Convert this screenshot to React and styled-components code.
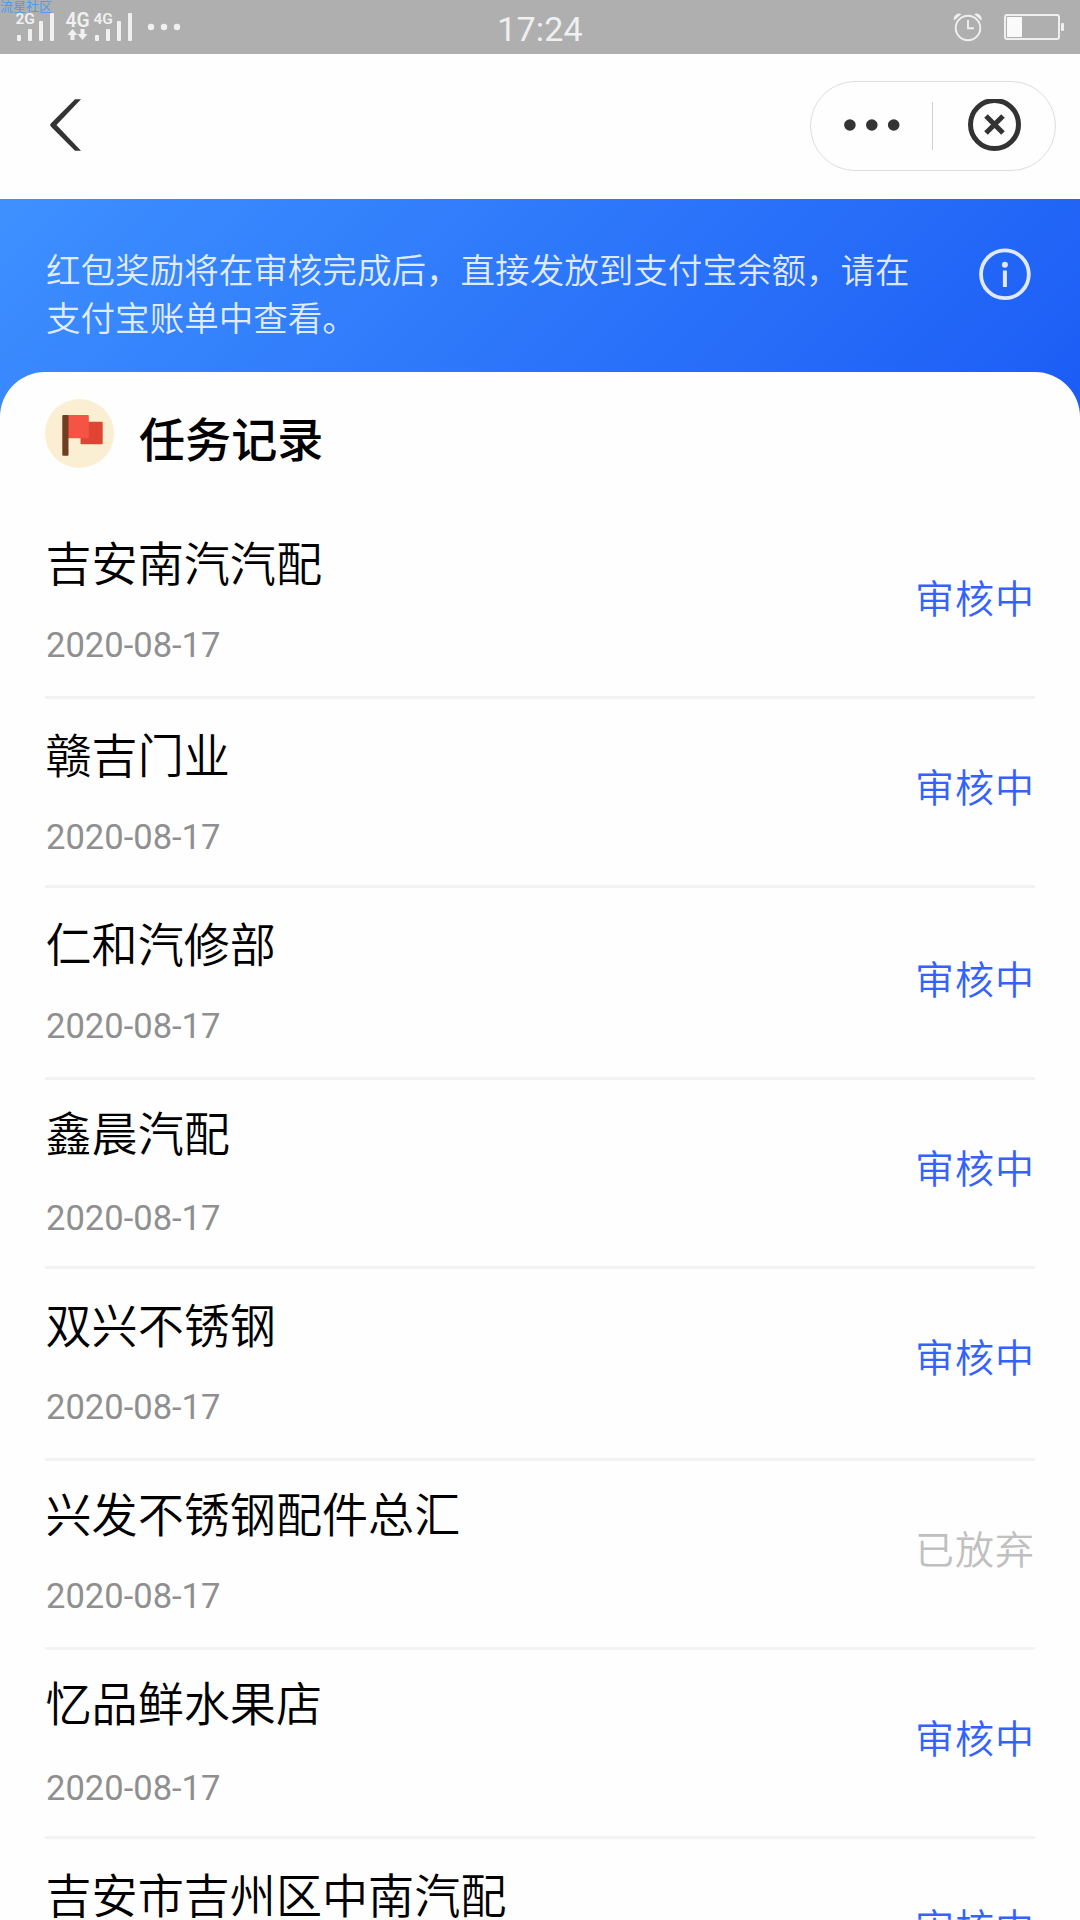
import React from "react";
import styled, { createGlobalStyle } from "styled-components";

const GlobalStyle = createGlobalStyle`
  * { box-sizing: border-box; }
  html, body { margin: 0; padding: 0; background: #fff; }
  body { overflow: hidden; font-family: Roboto, "Noto Sans CJK SC", sans-serif; }
`;

const Screen = styled.div`
  width: 1080px;
  height: 1920px;
  overflow: hidden;
  display: flex;
  flex-direction: column;
  background: #fefefe;
`;

const StatusBar = styled.header`
  position: relative;
  flex: none;
  height: 54px;
  display: grid;
  grid-template-columns: 1fr auto 1fr;
  align-items: start;
  background: #afafaf;
  color: #f0f0f0;
`;

const Watermark = styled.span`
  position: absolute;
  left: 0;
  top: -1px;
  font: 400 13px/14px "Noto Sans CJK SC", sans-serif;
  color: #4a9df0;
`;

const StatusLeft = styled.div`
  display: flex;
`;

const Clock = styled.time`
  padding-top: 10px;
  font-size: 34px;
  line-height: 38px;
  font-weight: 380;
  letter-spacing: 0.2px;
`;

const StatusRight = styled.div`
  display: flex;
  justify-content: flex-end;
`;

const NavBar = styled.nav`
  flex: none;
  height: 145px;
  display: flex;
  align-items: flex-start;
  justify-content: space-between;
  padding: 27px 24px 0 48px;
  background: #fefefe;
`;

const BackButton = styled.button`
  border: 0;
  padding: 0;
  margin-top: 17px;
  background: none;
  display: flex;
`;

const Capsule = styled.div`
  width: 246px;
  height: 90px;
  border: 1px solid #dedede;
  border-radius: 45px;
  display: flex;
  align-items: center;
`;

const CapsuleButton = styled.button`
  border: 0;
  padding: 0;
  background: none;
  display: flex;
  justify-content: center;
  width: ${(p) => p.$width}px;
`;

const CapsuleDivider = styled.span`
  width: 1px;
  height: 48px;
  background: #d0d0d0;
`;

const Content = styled.main`
  flex: 1;
  min-height: 0;
  background: linear-gradient(135deg, #3e90ff 0, #1b5cf5 100%) top / 100% 226px no-repeat;
`;

const Banner = styled.section`
  height: 173px;
  display: flex;
  justify-content: space-between;
  align-items: flex-start;
  padding: 48px 49px 0 46px;
`;

const BannerText = styled.p`
  margin: 0;
  width: 880px;
  font-size: 34.56px;
  line-height: 48px;
  font-weight: 350;
  color: rgba(255, 255, 255, 0.86);
`;

const Sheet = styled.section`
  height: 1548px;
  padding: 0 45px;
  border-radius: 45px 45px 0 0;
  background: #fefefe;
`;

const SheetHeader = styled.div`
  height: 132px;
  display: flex;
  align-items: flex-start;
  gap: 25px;
  padding-top: 27px;
`;

const SheetTitle = styled.h1`
  margin: 10px 0 0;
  font-size: 46.08px;
  line-height: 64px;
  font-weight: 500;
  color: #000;
`;

const Record = styled.article`
  height: ${(p) => p.$height}px;
  border-bottom: 3px solid #f3f3f3;
  display: flex;
  justify-content: space-between;
`;

const RecordName = styled.h2`
  margin: 0;
  padding: ${(p) => p.$top}px 0 0 0.5px;
  font-size: 46.08px;
  line-height: 64px;
  font-weight: 350;
  color: #000;
  white-space: nowrap;
`;

const RecordDate = styled.time`
  display: block;
  margin-top: ${(p) => p.$gap}px;
  padding-left: 1px;
  font-size: 34.56px;
  line-height: 40px;
  font-weight: 385;
  color: #8f8f8f;
`;

const RecordStatus = styled.span`
  padding-top: ${(p) => p.$top}px;
  font-size: 39px;
  line-height: 56px;
  font-weight: 350;
  letter-spacing: 1px;
  color: ${(p) => (p.$muted ? "#c0c0c0" : "#3462ff")};
`;

const records = [
  { name: "吉安南汽汽配", status: "审核中", height: 195, top: 29, gap: 28, statusTop: 68 },
  { name: "赣吉门业", status: "审核中", height: 189, top: 26, gap: 28, statusTop: 62 },
  { name: "仁和汽修部", status: "审核中", height: 192, top: 26, gap: 28, statusTop: 65 },
  { name: "鑫晨汽配", status: "审核中", height: 189, top: 23, gap: 31, statusTop: 62 },
  { name: "双兴不锈钢", status: "审核中", height: 192, top: 26, gap: 28, statusTop: 62 },
  { name: "兴发不锈钢配件总汇", status: "已放弃", muted: true, height: 189, top: 23, gap: 28, statusTop: 62 },
  { name: "忆品鲜水果店", status: "审核中", height: 189, top: 23, gap: 31, statusTop: 62 },
  { name: "吉安市吉州区中南汽配", status: "审核中", height: 192, top: 26, gap: 28, statusTop: 62 },
];

const SignalIcons = () => (
  <svg width="190" height="54" viewBox="0 0 190 54" fill="#f0f0f0" fontFamily="Roboto, sans-serif" fontWeight="600">
    <text x="15.500" y="24" fontSize="15.500">2G</text>
    <rect x="17" y="35" width="4" height="6" rx="1" />
    <rect x="28" y="29" width="4" height="12" rx="1" />
    <rect x="39" y="21" width="4" height="20" rx="1" />
    <rect x="50" y="13" width="4" height="28" rx="1" />
    <text x="65.500" y="26.700" fontSize="19.300">4G</text>
    <path d="M72.500 29l5 6h-3v5h-4v-5h-3zM82.500 40l5-6h-3v-5h-4v5h-3z" />
    <text x="93.500" y="24" fontSize="15.500">4G</text>
    <rect x="95" y="35" width="4" height="6" rx="1" />
    <rect x="106" y="29" width="4" height="12" rx="1" />
    <rect x="117" y="21" width="4" height="20" rx="1" />
    <rect x="128" y="13" width="4" height="28" rx="1" />
    <circle cx="151" cy="27" r="3.200" />
    <circle cx="164" cy="27" r="3.200" />
    <circle cx="177" cy="27" r="3.200" />
  </svg>
);

const AlarmAndBattery = () => (
  <svg width="130" height="54" viewBox="950 0 130 54" fill="none" stroke="#f0f0f0">
    <path d="M954 20.500a5.500 5.500 0 0 1 7.500-6.500zM981.500 20.500a5.500 5.500 0 0 0-7.500-6.500z" fill="#f0f0f0" stroke="none" />
    <circle cx="968" cy="28" r="12.300" strokeWidth="1.900" />
    <path d="M968 20v8.300h6" strokeWidth="1.900" />
    <rect x="1005" y="15" width="54" height="24" rx="2" strokeWidth="2" />
    <rect x="1007" y="17" width="15" height="20" fill="#fafafa" stroke="none" />
    <rect x="1061" y="23" width="3" height="8" rx="1" fill="#f0f0f0" stroke="none" />
  </svg>
);

const BackIcon = () => (
  <svg width="36" height="54" viewBox="0 0 36 54" fill="#333">
    <path d="M27 1.300h6L8.500 27 33 52.700h-6L2.800 28.500q-1.400-1.500 0-3z" />
  </svg>
);

const MoreIcon = () => (
  <svg width="56" height="14" viewBox="0 0 56 14" fill="#333">
    <circle cx="5.900" cy="6" r="5.800" />
    <circle cx="27.800" cy="6" r="5.800" />
    <circle cx="49.700" cy="6" r="5.800" />
  </svg>
);

const CloseIcon = () => (
  <svg width="54" height="54" viewBox="0 0 54 54" fill="none" stroke="#333">
    <circle cx="27.500" cy="26.500" r="24" strokeWidth="5" transform="translate(0 -1)" />
    <path d="M19 17l17 17M36 17l-17 17" strokeWidth="5" />
  </svg>
);

const InfoIcon = () => (
  <svg width="54" height="54" viewBox="0 0 54 54" fill="none" stroke="#e0e9ff">
    <circle cx="27.900" cy="27.300" r="23.900" strokeWidth="3.800" />
    <circle cx="27.900" cy="17.700" r="3" fill="#e0e9ff" stroke="none" />
    <path d="M27.900 23.500v16.500" strokeWidth="4" />
  </svg>
);

const FlagIcon = () => (
  <svg width="69" height="69" viewBox="0 0 69 69">
    <circle cx="34.500" cy="34.500" r="34.500" fill="#faefd2" />
    <rect x="35.500" y="22.700" width="22.200" height="22.500" rx="1" fill="#df4434" />
    <rect x="22" y="16" width="21.800" height="23.200" rx="1" fill="#f55444" />
    <rect x="17.300" y="16" width="6.200" height="40.700" rx="1" fill="#6e3d22" />
  </svg>
);

export default function App() {
  return (
    <Screen>
      <GlobalStyle />
      <StatusBar>
        <StatusLeft><SignalIcons /></StatusLeft>
        <Clock>17:24</Clock>
        <StatusRight><AlarmAndBattery /></StatusRight>
        <Watermark>流星社区</Watermark>
      </StatusBar>
      <NavBar>
        <BackButton aria-label="返回"><BackIcon /></BackButton>
        <Capsule>
          <CapsuleButton $width={121} aria-label="更多"><MoreIcon /></CapsuleButton>
          <CapsuleDivider />
          <CapsuleButton $width={122} aria-label="关闭"><CloseIcon /></CapsuleButton>
        </Capsule>
      </NavBar>
      <Content>
        <Banner>
          <BannerText>红包奖励将在审核完成后，直接发放到支付宝余额，请在支付宝账单中查看。</BannerText>
          <InfoIcon />
        </Banner>
        <Sheet>
          <SheetHeader>
            <FlagIcon />
            <SheetTitle>任务记录</SheetTitle>
          </SheetHeader>
          {records.map((r) => (
            <Record key={r.name} $height={r.height}>
              <div>
                <RecordName $top={r.top}>{r.name}</RecordName>
                <RecordDate $gap={r.gap}>2020-08-17</RecordDate>
              </div>
              <RecordStatus $top={r.statusTop} $muted={r.muted}>{r.status}</RecordStatus>
            </Record>
          ))}
        </Sheet>
      </Content>
    </Screen>
  );
}
